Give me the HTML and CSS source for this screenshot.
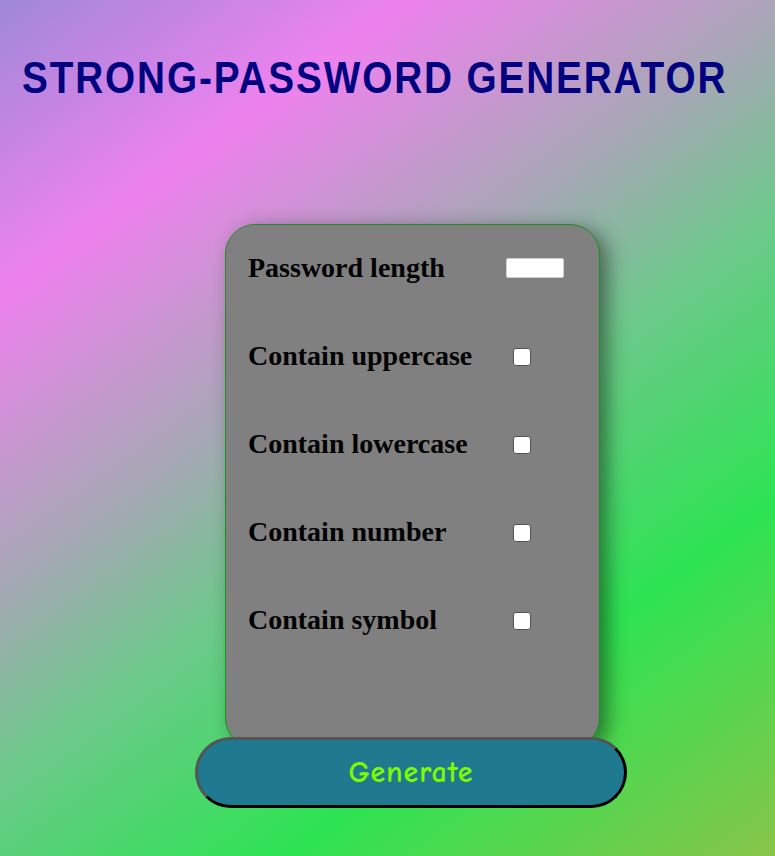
FILE: index.html
```html
<!DOCTYPE html>
<html lang="en">
<head>
<meta charset="utf-8">
<title>Strong-Password Generator</title>
<link rel="stylesheet" href="styles.css">
</head>
<body>
  <h1 class="title">STRONG-PASSWORD GENERATOR</h1>
  <main class="app">
    <section class="card">
      <div class="row">
        <label class="label" for="len">Password length</label>
        <input class="num" type="number" id="len">
      </div>
      <div class="row">
        <label class="label" for="up">Contain uppercase</label>
        <input class="check" type="checkbox" id="up">
      </div>
      <div class="row">
        <label class="label" for="low">Contain lowercase</label>
        <input class="check" type="checkbox" id="low">
      </div>
      <div class="row">
        <label class="label" for="numb">Contain number</label>
        <input class="check" type="checkbox" id="numb">
      </div>
      <div class="row">
        <label class="label" for="sym">Contain symbol</label>
        <input class="check" type="checkbox" id="sym">
      </div>
    </section>
    <button class="generate" type="button">Generate</button>
  </main>
</body>
</html>
```
FILE: styles.css
```css
html {
  min-height: 100%;
  background: linear-gradient(144deg,
    #9f88d8 0%,
    #ee82ee 21%,
    #a4a9b3 42%,
    #6cc98a 55%,
    #2de352 75%,
    #88c54a 100%);
}

body {
  margin: 0;
  min-height: 856px;
}

.title {
  margin: 0;
  padding: 52px 0 0 22px;
  font-family: "Liberation Sans", Arial, sans-serif;
  font-weight: 700;
  font-size: 45px;
  line-height: 52px;
  letter-spacing: 2.2px;
  white-space: nowrap;
  color: #000080;
  transform: scaleX(0.86);
  transform-origin: 22px 0;
}

.app {
  display: flex;
  flex-direction: column;
  align-items: flex-start;
  padding-top: 120px;
}

.card {
  box-sizing: border-box;
  margin-left: 225px;
  width: 375px;
  height: 524px;
  padding: 27px 0 0 22px;
  background: #808080;
  border: 1px solid #1f8f1f;
  border-radius: 30px;
  box-shadow: 8px 5px 20px rgba(0, 0, 0, 0.45);
}

.row {
  display: grid;
  grid-template-columns: 258px auto;
  align-items: center;
  height: 32px;
  margin-bottom: 56px;
}

.label {
  font-family: "Liberation Serif", "Times New Roman", serif;
  font-weight: 700;
  font-size: 28px;
  line-height: 32px;
  color: #000;
}

.num {
  box-sizing: border-box;
  width: 58px;
  height: 20px;
  margin: 0;
  padding: 0;
  border: 1px solid #d0d0d0;
  border-radius: 2px;
  background: #fff;
}

.check {
  appearance: none;
  box-sizing: border-box;
  width: 18px;
  height: 18px;
  margin: 2px 0 0 7px;
  border: 1px solid #555;
  border-radius: 3px;
  background: #fff;
}

.generate {
  position: relative;
  box-sizing: border-box;
  margin: -11px 0 0 195px;
  width: 432px;
  height: 71px;
  border-width: 3px;
  border-style: solid;
  border-color: #555 #000 #000 #555;
  border-radius: 36px;
  background: #1f7a8f;
  color: #7cfc00;
  font-family: "Comic Sans MS", "Comic Neue", "DejaVu Sans", sans-serif;
  font-weight: 700;
  font-size: 30px;
  letter-spacing: 1px;
  padding: 0;
}
```
